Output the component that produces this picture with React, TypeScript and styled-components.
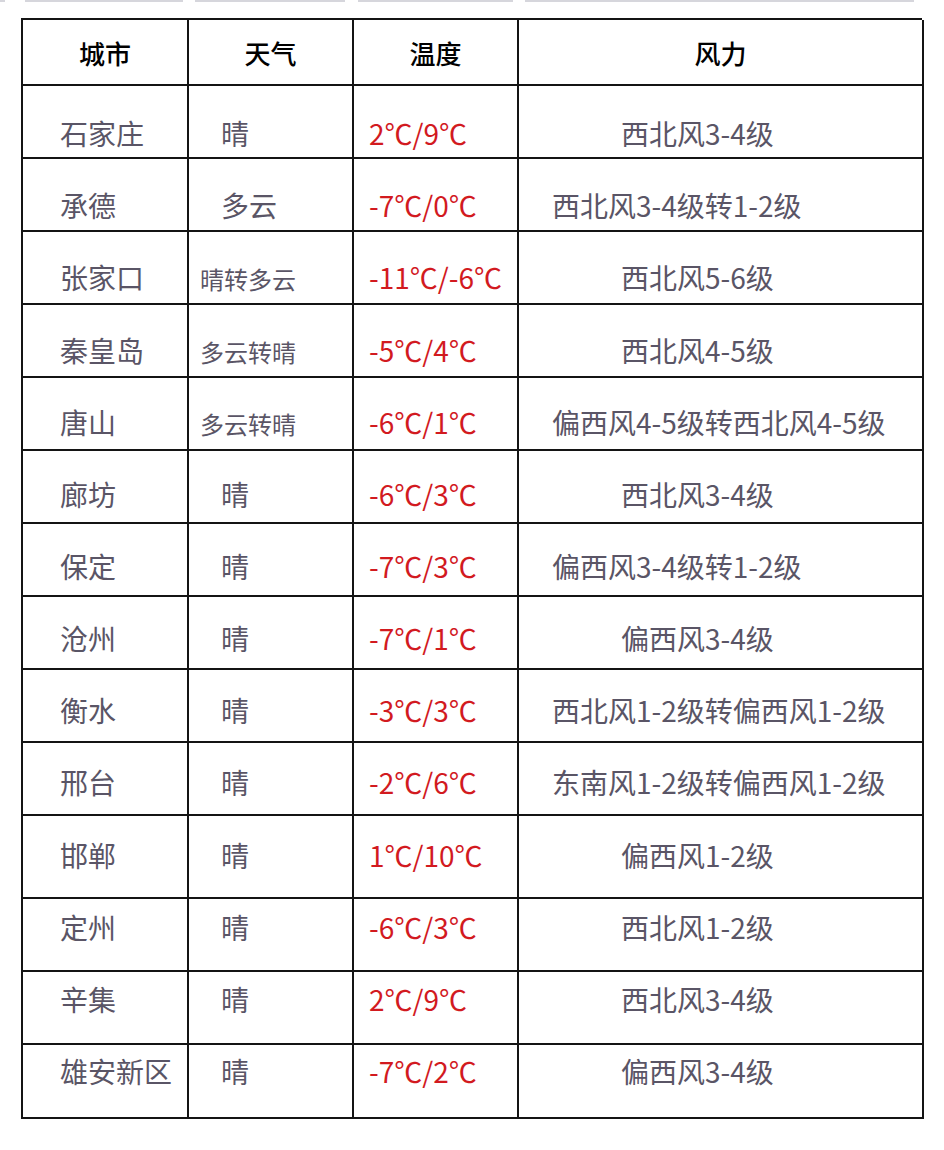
import React from "react";
import styled, { createGlobalStyle } from "styled-components";

const GlobalStyle = createGlobalStyle`
  html, body {
    margin: 0;
    padding: 0;
    background: #ffffff;
  }
  body {
    font-family: "Noto Sans CJK SC", "Noto Sans", sans-serif;
  }
`;

const Page = styled.div`
  width: 944px;
  min-height: 1150px;
  background: #ffffff;
  display: flex;
  flex-direction: column;
`;

const TopStrip = styled.div`
  display: flex;
  height: 2px;
`;

const StripSegment = styled.div<{ $w: number; $gap: number }>`
  width: ${(p) => p.$w}px;
  margin-left: ${(p) => p.$gap}px;
  height: 2px;
  background: #d6d6dc;
`;

const Table = styled.div`
  margin: 16px 0 0 21px;
  display: grid;
  grid-template-columns: 166px 165px 165px 405px;
  width: 901px;
  border-top: 2px solid #141414;
  border-left: 2px solid #141414;
  box-sizing: border-box;
`;

const HeadCell = styled.div`
  height: 66px;
  box-sizing: border-box;
  border-right: 2px solid #141414;
  border-bottom: 2px solid #141414;
  display: flex;
  align-items: center;
  justify-content: center;
  font-size: 26px;
  font-weight: 500;
  color: #000000;
  line-height: 1;
  padding-top: 2px;
`;

const Cell = styled.div<{ $h: number; $pb: number; $indent: number; $size?: number; $red?: boolean }>`
  height: ${(p) => p.$h}px;
  box-sizing: border-box;
  border-right: 2px solid #141414;
  border-bottom: 2px solid #141414;
  display: flex;
  align-items: flex-end;
  padding-left: ${(p) => p.$indent}px;
  padding-bottom: ${(p) => p.$pb}px;
  font-size: ${(p) => p.$size ?? 28}px;
  line-height: 1;
  color: ${(p) => (p.$red ? "#d21a1f" : "#5a5566")};
  white-space: nowrap;
`;

type Row = {
  city: string;
  weather: string;
  temp: string;
  wind: string;
};

const rows: Row[] = [
  { city: "石家庄", weather: "晴", temp: "2℃/9℃", wind: "西北风3-4级" },
  { city: "承德", weather: "多云", temp: "-7℃/0℃", wind: "西北风3-4级转1-2级" },
  { city: "张家口", weather: "晴转多云", temp: "-11℃/-6℃", wind: "西北风5-6级" },
  { city: "秦皇岛", weather: "多云转晴", temp: "-5℃/4℃", wind: "西北风4-5级" },
  { city: "唐山", weather: "多云转晴", temp: "-6℃/1℃", wind: "偏西风4-5级转西北风4-5级" },
  { city: "廊坊", weather: "晴", temp: "-6℃/3℃", wind: "西北风3-4级" },
  { city: "保定", weather: "晴", temp: "-7℃/3℃", wind: "偏西风3-4级转1-2级" },
  { city: "沧州", weather: "晴", temp: "-7℃/1℃", wind: "偏西风3-4级" },
  { city: "衡水", weather: "晴", temp: "-3℃/3℃", wind: "西北风1-2级转偏西风1-2级" },
  { city: "邢台", weather: "晴", temp: "-2℃/6℃", wind: "东南风1-2级转偏西风1-2级" },
  { city: "邯郸", weather: "晴", temp: "1℃/10℃", wind: "偏西风1-2级" },
  { city: "定州", weather: "晴", temp: "-6℃/3℃", wind: "西北风1-2级" },
  { city: "辛集", weather: "晴", temp: "2℃/9℃", wind: "西北风3-4级" },
  { city: "雄安新区", weather: "晴", temp: "-7℃/2℃", wind: "偏西风3-4级" },
];

const rowHeights = [73, 73, 73, 73, 73, 73, 73, 73, 73, 73, 83, 73, 73, 74];
const rowPad = [10, 11, 12, 12, 13, 14, 15, 16, 17, 18, 28, 29, 30, 32];

const strip = [
  { w: 5, gap: 0 },
  { w: 158, gap: 20 },
  { w: 150, gap: 12 },
  { w: 155, gap: 13 },
  { w: 389, gap: 12 },
];

export default function App() {
  return (
    <>
      <GlobalStyle />
      <Page>
        <TopStrip>
          {strip.map((s, i) => (
            <StripSegment key={i} $w={s.w} $gap={s.gap} />
          ))}
        </TopStrip>
        <Table>
          <HeadCell>城市</HeadCell>
          <HeadCell>天气</HeadCell>
          <HeadCell>温度</HeadCell>
          <HeadCell>风力</HeadCell>
          {rows.map((r, i) => {
            const h = rowHeights[i];
            const pb = rowPad[i];
            const compound = r.weather.length > 2;
            const longWind = r.wind.includes("转");
            return (
              <React.Fragment key={r.city}>
                <Cell $h={h} $pb={pb} $indent={37}>{r.city}</Cell>
                <Cell $h={h} $pb={pb} $indent={compound ? 11 : 32} $size={compound ? 24 : 28}>
                  {r.weather}
                </Cell>
                <Cell $h={h} $pb={pb} $indent={15} $red>
                  {r.temp}
                </Cell>
                <Cell $h={h} $pb={pb} $indent={longWind ? 33 : 102}>{r.wind}</Cell>
              </React.Fragment>
            );
          })}
        </Table>
      </Page>
    </>
  );
}
